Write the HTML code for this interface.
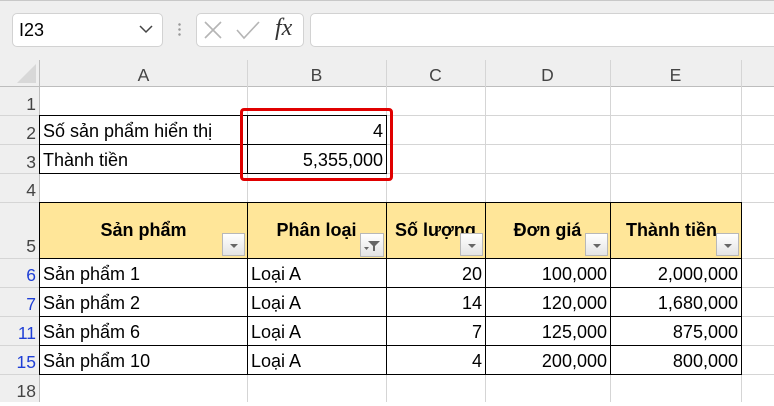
<!DOCTYPE html>
<html><head><meta charset="utf-8"><style>
*{margin:0;padding:0;box-sizing:border-box}
body{width:774px;height:402px;overflow:hidden;background:#fff;position:relative;font-family:"Liberation Sans",Arial,sans-serif;color:#000}
.a{position:absolute}
.t{position:absolute;font-size:18px;white-space:nowrap;line-height:29px;margin-top:2px}
.r{text-align:right}
.h{position:absolute;background:#d5d5d5}
.rh{position:absolute;left:0;width:36px;text-align:right;font-size:17.5px;color:#444;line-height:29px;margin-top:2px}
.blue{color:#1f3fd6}
.ch{position:absolute;top:60px;height:26px;line-height:30px;text-align:center;font-size:17.5px;color:#444}
.fb{position:absolute;width:23px;height:23px;border:1px solid #b8b8b8;background:linear-gradient(#fff,#e4e4e4)}
.fb:after{content:"";position:absolute;left:7px;top:10px;border-left:4px solid transparent;border-right:4px solid transparent;border-top:4px solid #666}
.hd{position:absolute;font-weight:bold;font-size:18px;text-align:center;top:220px;white-space:nowrap}
</style></head><body>
<div class="a" style="left:0;top:0;width:774px;height:60px;background:#efefef"></div>
<div class="a" style="left:0;top:0;width:774px;height:1px;background:#c8c8c8"></div>
<div class="a" style="left:12px;top:13px;width:151px;height:34px;background:#fff;border:1px solid #d2d2d2;border-radius:5px"></div>
<div class="t" style="left:19px;top:14px;font-size:18px">I23</div>
<svg class="a" style="left:139px;top:24px" width="14" height="10"><path d="M1 2 L7 8 L13 2" fill="none" stroke="#444" stroke-width="1.5"/></svg>
<div class="a" style="left:178px;top:22px;width:3px;height:16px;background:radial-gradient(circle,#999 1px,transparent 1.5px) 0 0/3px 5px"></div>
<div class="a" style="left:196px;top:13px;width:108px;height:34px;background:#fff;border:1px solid #d2d2d2;border-radius:5px"></div>
<svg class="a" style="left:203px;top:20px" width="20" height="20"><path d="M2 2 L18 18 M18 2 L2 18" stroke="#b5b5b5" stroke-width="1.6"/></svg>
<svg class="a" style="left:235px;top:20px" width="26" height="20"><path d="M2 10 L9 18 L24 2" fill="none" stroke="#b5b5b5" stroke-width="1.6"/></svg>
<div class="a" style="left:275px;top:15px;font-family:'Liberation Serif',serif;font-style:italic;font-size:24px;color:#333">fx</div>
<div class="a" style="left:310px;top:13px;width:470px;height:34px;background:#fff;border:1px solid #d2d2d2;border-radius:5px"></div>
<div class="a" style="left:0;top:60px;width:774px;height:26px;background:#efefef"></div>
<div class="a" style="left:0;top:60px;width:39px;height:342px;background:#efefef"></div>
<svg class="a" style="left:15px;top:64px" width="22" height="20"><path d="M21 0 L21 19 L2 19 Z" fill="#d8d8d8"/></svg>
<div class="h" style="left:0;top:86px;width:774px;height:1px;background:#bdbdbd"></div>
<div class="h" style="left:39px;top:60px;width:1px;height:342px;background:#bdbdbd"></div>
<div class="ch" style="left:40px;width:207px">A</div>
<div class="ch" style="left:247px;width:139px">B</div>
<div class="ch" style="left:386px;width:99px">C</div>
<div class="ch" style="left:485px;width:125px">D</div>
<div class="ch" style="left:610px;width:131px">E</div>
<div class="h" style="left:247px;top:60px;width:1px;height:342px"></div>
<div class="h" style="left:386px;top:60px;width:1px;height:342px"></div>
<div class="h" style="left:485px;top:60px;width:1px;height:342px"></div>
<div class="h" style="left:610px;top:60px;width:1px;height:342px"></div>
<div class="h" style="left:741px;top:60px;width:1px;height:342px"></div>
<div class="h" style="left:0;top:115px;width:774px;height:1px"></div>
<div class="h" style="left:0;top:144px;width:774px;height:1px"></div>
<div class="h" style="left:0;top:173px;width:774px;height:1px"></div>
<div class="h" style="left:0;top:202px;width:774px;height:1px"></div>
<div class="h" style="left:0;top:258px;width:774px;height:1px"></div>
<div class="h" style="left:0;top:287px;width:774px;height:1px"></div>
<div class="h" style="left:0;top:316px;width:774px;height:1px"></div>
<div class="h" style="left:0;top:345px;width:774px;height:1px"></div>
<div class="h" style="left:0;top:374px;width:774px;height:1px"></div>
<div class="rh" style="top:88px">1</div>
<div class="rh" style="top:117px">2</div>
<div class="rh" style="top:146px">3</div>
<div class="rh" style="top:174px">4</div>
<div class="rh" style="top:230px">5</div>
<div class="rh blue" style="top:259px">6</div>
<div class="rh blue" style="top:288px">7</div>
<div class="rh blue" style="top:317px">11</div>
<div class="rh blue" style="top:346px">15</div>
<div class="rh" style="top:375px">18</div>
<div class="a" style="left:39px;top:115px;width:348px;height:59px;border:1px solid #000"></div>
<div class="a" style="left:39px;top:144px;width:348px;height:1px;background:#000"></div>
<div class="a" style="left:247px;top:115px;width:1px;height:59px;background:#000"></div>
<div class="t" style="left:43px;top:115px">Số sản phẩm hiển thị</div>
<div class="t" style="left:43px;top:144px">Thành tiền</div>
<div class="t r" style="left:250px;width:133px;top:115px">4</div>
<div class="t r" style="left:250px;width:133px;top:144px">5,355,000</div>
<div class="a" style="left:240px;top:108px;width:153px;height:73px;border:3px solid #e00000;border-radius:4px"></div>
<div class="a" style="left:39px;top:202px;width:702px;height:56px;background:#ffe699"></div>
<div class="a" style="left:39px;top:202px;width:703px;height:173px;border:1px solid #000"></div>
<div class="a" style="left:39px;top:258px;width:703px;height:1px;background:#000"></div>
<div class="a" style="left:39px;top:287px;width:703px;height:1px;background:#000"></div>
<div class="a" style="left:39px;top:316px;width:703px;height:1px;background:#000"></div>
<div class="a" style="left:39px;top:345px;width:703px;height:1px;background:#000"></div>
<div class="a" style="left:247px;top:202px;width:1px;height:173px;background:#000"></div>
<div class="a" style="left:386px;top:202px;width:1px;height:173px;background:#000"></div>
<div class="a" style="left:485px;top:202px;width:1px;height:173px;background:#000"></div>
<div class="a" style="left:610px;top:202px;width:1px;height:173px;background:#000"></div>
<div class="hd" style="left:40px;width:207px">Sản phẩm</div>
<div class="hd" style="left:247px;width:139px">Phân loại</div>
<div class="hd" style="left:386px;width:99px;text-align:left;padding-left:9px;overflow:hidden">Số lượng</div>
<div class="hd" style="left:485px;width:125px">Đơn giá</div>
<div class="hd" style="left:610px;width:131px;text-align:left;padding-left:16px;overflow:hidden">Thành tiền</div>
<div class="fb" style="left:222px;top:233px"></div>
<div class="a" style="left:360px;top:233px;width:24px;height:24px;border:1px solid #b8b8b8;background:linear-gradient(#fff,#e4e4e4)"><svg width="22" height="22"><path d="M7 7 L19 7 L14 12 L14 17 L12 17 L12 12 Z" fill="#666"/><path d="M3 13 L8 13 L5.5 16 Z" fill="#666"/></svg></div>
<div class="fb" style="left:460px;top:233px"></div>
<div class="fb" style="left:585px;top:233px"></div>
<div class="fb" style="left:716px;top:233px"></div>
<div class="t" style="left:43px;top:258px">Sản phẩm 1</div>
<div class="t" style="left:43px;top:287px">Sản phẩm 2</div>
<div class="t" style="left:43px;top:316px">Sản phẩm 6</div>
<div class="t" style="left:43px;top:345px">Sản phẩm 10</div>
<div class="t" style="left:251px;top:258px">Loại A</div>
<div class="t" style="left:251px;top:287px">Loại A</div>
<div class="t" style="left:251px;top:316px">Loại A</div>
<div class="t" style="left:251px;top:345px">Loại A</div>
<div class="t r" style="left:386px;width:96px;top:258px">20</div>
<div class="t r" style="left:386px;width:96px;top:287px">14</div>
<div class="t r" style="left:386px;width:96px;top:316px">7</div>
<div class="t r" style="left:386px;width:96px;top:345px">4</div>
<div class="t r" style="left:485px;width:122px;top:258px">100,000</div>
<div class="t r" style="left:485px;width:122px;top:287px">120,000</div>
<div class="t r" style="left:485px;width:122px;top:316px">125,000</div>
<div class="t r" style="left:485px;width:122px;top:345px">200,000</div>
<div class="t r" style="left:610px;width:128px;top:258px">2,000,000</div>
<div class="t r" style="left:610px;width:128px;top:287px">1,680,000</div>
<div class="t r" style="left:610px;width:128px;top:316px">875,000</div>
<div class="t r" style="left:610px;width:128px;top:345px">800,000</div>
</body></html>
